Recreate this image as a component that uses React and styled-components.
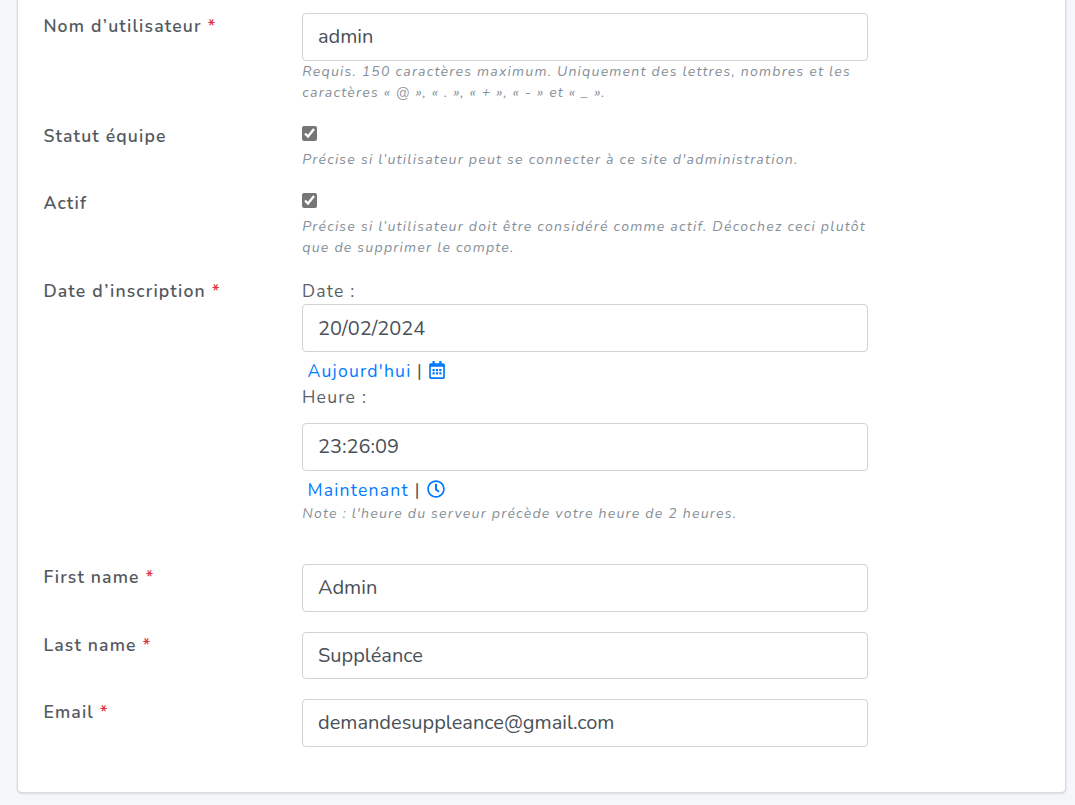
import React from "react";
import styled, { createGlobalStyle } from "styled-components";
import { FaRegCalendarAlt, FaRegClock } from "react-icons/fa";

const GlobalStyle = createGlobalStyle`
  *, *::before, *::after { box-sizing: border-box; }
  body {
    margin: 0;
    background: #f4f6f9;
    color: #495057;
    font-family: Nunito, Lato, "Noto Sans", sans-serif;
    font-size: 17.6px;
    line-height: 26px;
    letter-spacing: 1.2px;
    overflow: hidden;
  }
`;

const Page = styled.main`
  height: 805px;
  padding: 0 9px 12px 18px;
`;

const Card = styled.form`
  display: flex;
  flex-direction: column;
  gap: 20px;
  width: 1047px;
  height: 792px;
  padding: 13px 25px 0;
  background: #fff;
  border-radius: 0 0 4px 4px;
  box-shadow: 0 0 0 1px #dcdcdc, 0 0 1px 1px rgba(0, 0, 0, 0.14),
    0 1px 3px rgba(0, 0, 0, 0.2);
`;

const Row = styled.div`
  display: grid;
  grid-template-columns: 258.6px 566px;
  padding-left: 0.4px;
  margin-bottom: ${(p) => p.$after || 0}px;
`;

const Label = styled.label`
  color: #54595e;
  font-weight: 600;
  letter-spacing: 1.15px;
  line-height: 26px;
`;

const Required = styled.span`
  color: #dc3545;
`;

const Field = styled.div`
  display: flex;
  flex-direction: column;
`;

const Input = styled.input`
  display: block;
  width: 100%;
  height: ${(p) => p.$height || 48}px;
  margin: 0;
  padding: 0 15px ${(p) => p.$lift || 0}px;
  border: 1px solid #ced4da;
  border-radius: 4px;
  background: #fff;
  color: #495057;
  font-family: inherit;
  font-size: 20px;
  letter-spacing: normal;
  outline: none;
`;

const CheckLine = styled.div`
  display: flex;
  height: 26px;
  padding-top: 2.5px;
`;

const Checkbox = styled.input`
  width: 15px;
  height: 15px;
  margin: 0;
  accent-color: #767676;
`;

const Help = styled.div`
  display: flex;
  flex-direction: column;
  padding-left: 0.3px;
  color: #869099;
  font-size: 14.08px;
  font-style: italic;
  letter-spacing: 1.217px;
  line-height: 21px;
  white-space: nowrap;
`;

const Caption = styled.div`
  height: 26px;
  margin-bottom: ${(p) => p.$after || 0}px;
  color: #5a5f64;
`;

const Shortcuts = styled.div`
  display: flex;
  align-items: center;
  gap: ${(p) => p.$gap}px;
  height: 26px;
  margin-top: 6px;
  padding-left: 5.5px;
`;

const Shortcut = styled.a`
  display: inline-flex;
  color: #007bff;
  text-decoration: none;

  svg {
    margin-bottom: 2px;
  }
`;

const FieldLabel = ({ text, required }) => (
  <Label>
    {text}
    {required && <Required> *</Required>}
  </Label>
);

const TextRow = ({ label, value, height, lift }) => (
  <Row>
    <FieldLabel text={label} required />
    <Field>
      <Input defaultValue={value} $height={height} $lift={lift} />
    </Field>
  </Row>
);

export default function App() {
  return (
    <>
      <GlobalStyle />
      <Page>
        <Card>
          <Row>
            <FieldLabel text="Nom d’utilisateur" required />
            <Field>
              <Input defaultValue="admin" $lift={1} />
              <Help>
                <span>Requis. 150 caractères maximum. Uniquement des lettres, nombres et les</span>
                <span>caractères « @ », « . », « + », « - » et « _ ».</span>
              </Help>
            </Field>
          </Row>
          <Row>
            <FieldLabel text="Statut équipe" />
            <Field>
              <CheckLine><Checkbox type="checkbox" defaultChecked /></CheckLine>
              <Help>
                <span>Précise si l’utilisateur peut se connecter à ce site d'administration.</span>
              </Help>
            </Field>
          </Row>
          <Row>
            <FieldLabel text="Actif" />
            <Field>
              <CheckLine><Checkbox type="checkbox" defaultChecked /></CheckLine>
              <Help>
                <span>Précise si l’utilisateur doit être considéré comme actif. Décochez ceci plutôt</span>
                <span>que de supprimer le compte.</span>
              </Help>
            </Field>
          </Row>
          <Row $after={20}>
            <FieldLabel text="Date d’inscription" required />
            <Field>
              <Caption>Date :</Caption>
              <Input defaultValue="20/02/2024" />
              <Shortcuts $gap={5.5}>
                <Shortcut href="#">Aujourd'hui</Shortcut>
                <span>|</span>
                <Shortcut href="#"><FaRegCalendarAlt size={18} /></Shortcut>
              </Shortcuts>
              <Caption $after={13}>Heure :</Caption>
              <Input defaultValue="23:26:09" $lift={1} />
              <Shortcuts $gap={6}>
                <Shortcut href="#">Maintenant</Shortcut>
                <span>|</span>
                <Shortcut href="#"><FaRegClock size={18} /></Shortcut>
              </Shortcuts>
              <Help>
                <span>Note : l'heure du serveur précède votre heure de 2 heures.</span>
              </Help>
            </Field>
          </Row>
          <TextRow label="First name" value="Admin" height={47.5} />
          <TextRow label="Last name" value="Suppléance" height={47.5} />
          <TextRow label="Email" value="demandesuppleance@gmail.com" lift={1} />
        </Card>
      </Page>
    </>
  );
}
